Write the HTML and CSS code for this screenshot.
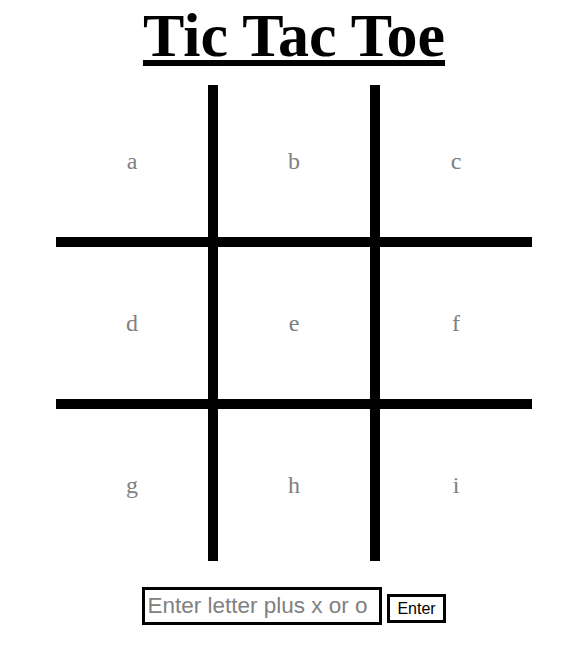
FILE: index.html
```html
<!DOCTYPE html>
<html>
  <head>
    <title>Tic Tac Toe</title>
    <link rel="stylesheet" href="styles.css">
  </head>
  <body>
    <div class="game">
      <h1 class="title">Tic Tac Toe</h1>
      <div class="board">
        <div class="cell">a</div>
        <div class="cell">b</div>
        <div class="cell">c</div>
        <div class="cell">d</div>
        <div class="cell">e</div>
        <div class="cell">f</div>
        <div class="cell">g</div>
        <div class="cell">h</div>
        <div class="cell">i</div>
      </div>
      <div class="controls">
        <input type="text" class="move-input" placeholder="Enter letter plus x or o" />
        <button class="enter-btn">Enter</button>
      </div>
    </div>
  </body>
</html>
```

FILE: styles.css
```css
body {
  margin: 0;
  padding-left: 5px;
  background-color: #ffffff;
  font-family: "Liberation Serif", serif;
}

.game {
  display: flex;
  flex-direction: column;
  align-items: center;
}

.title {
  margin: 0;
  height: 71px;
  line-height: 71px;
  font-size: 62px;
  font-weight: bold;
  text-decoration: underline;
  color: #000000;
}

.board {
  display: grid;
  grid-template-columns: repeat(3, 152px);
  grid-template-rows: repeat(3, 152px);
  gap: 10px;
  background-color: #000000;
  margin-top: 14px;
}

.cell {
  display: flex;
  justify-content: center;
  align-items: center;
  background-color: #ffffff;
  color: #808080;
  font-size: 24px;
}

.controls {
  display: flex;
  align-items: flex-end;
  gap: 5px;
  margin-top: 26px;
}

.move-input {
  box-sizing: border-box;
  width: 240px;
  height: 38px;
  border: 3px solid #000000;
  padding: 0 2px;
  font-family: "Liberation Sans", Arial, sans-serif;
  font-size: 22.5px;
  outline: none;
}

.move-input::placeholder {
  color: #808080;
}

.enter-btn {
  box-sizing: border-box;
  height: 29px;
  margin-bottom: 2px;
  padding: 0 7px;
  border: 3px solid #000000;
  background-color: #ffffff;
  color: #000000;
  font-family: "Liberation Sans", Arial, sans-serif;
  font-size: 16px;
}
```
